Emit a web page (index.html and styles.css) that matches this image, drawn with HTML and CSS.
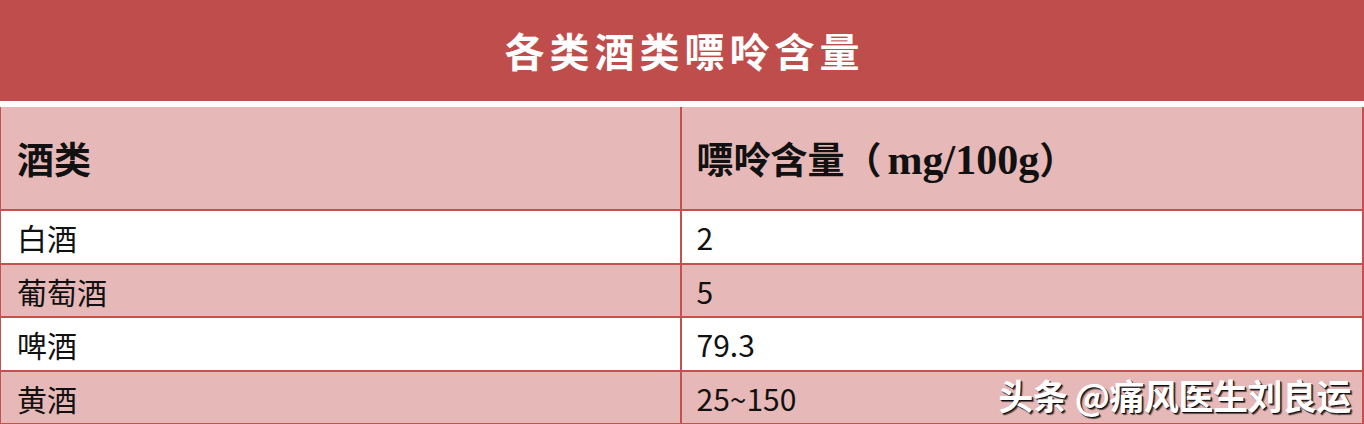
FILE: index.html
```html
<!DOCTYPE html>
<html lang="zh-CN">
<head>
<meta charset="utf-8">
<title>各类酒类嘌呤含量</title>
<link rel="stylesheet" href="styles.css">
</head>
<body>
<div class="page">
  <div class="title">各类酒类嘌呤含量</div>
  <div class="gap"></div>
  <table class="grid">
    <tr class="head">
      <th class="c1">酒类</th>
      <th class="c2">嘌呤含量（<span class="latin">mg/100g</span>）</th>
    </tr>
    <tr class="r white"><td class="c1">白酒</td><td class="c2">2</td></tr>
    <tr class="r pink short"><td class="c1">葡萄酒</td><td class="c2">5</td></tr>
    <tr class="r white"><td class="c1">啤酒</td><td class="c2">79.3</td></tr>
    <tr class="r pink short last"><td class="c1">黄酒</td><td class="c2">25~150</td></tr>
  </table>
  <div class="watermark">头条 @痛风医生刘良运</div>
</div>
</body>
</html>
```

FILE: styles.css
```css
html, body {
  margin: 0;
  padding: 0;
  background: #ffffff;
}
.page {
  position: relative;
  width: 1364px;
  height: 424px;
  overflow: hidden;
  font-family: "Noto Sans CJK SC", sans-serif;
}
.title {
  height: 101px;
  background: #bf4d4b;
  color: #ffffff;
  display: flex;
  align-items: center;
  justify-content: center;
  font-size: 40px;
  font-weight: 700;
  letter-spacing: 5px;
  padding-left: 5px;
  padding-bottom: 2px;
  box-sizing: border-box;
}
.gap {
  height: 6px;
  background: #ffffff;
}
.grid {
  width: 1364px;
  border-collapse: collapse;
  table-layout: fixed;
}
.grid th, .grid td {
  padding: 0;
  text-align: left;
  vertical-align: middle;
  border-bottom: 2px solid #c5504e;
}
.grid .c1 {
  width: 680px;
  padding-left: 16px;
  border-left: 1px solid #c5504e;
  border-right: 2px solid #c5504e;
  box-sizing: border-box;
}
.grid .c2 {
  padding-left: 15px;
  border-right: 2px solid #c5504e;
}
.head th {
  height: 102px;
  background: #e6b8b7;
  font-family: "Liberation Serif", "Noto Sans CJK SC", serif;
  font-size: 37px;
  font-weight: 700;
  color: #111111;
}
.head .latin {
  font-family: "Liberation Serif", serif;
  font-size: 42px;
  font-weight: 700;
  padding-left: 6px;
}
.r td {
  height: 52px;
  font-size: 30px;
  color: #111111;
  line-height: 1;
}
.r.short td {
  height: 51px;
}
.r.white td {
  background: #ffffff;
}
.r.pink td {
  background: #e6b8b7;
}
.watermark {
  position: absolute;
  right: 13px;
  bottom: 12px;
  font-size: 35px;
  font-weight: 700;
  color: #ffffff;
  line-height: 1;
  white-space: nowrap;
  letter-spacing: -0.5px;
  text-shadow: 1px 1px 0 #111111, 2px 2px 1px rgba(0, 0, 0, 0.6);
}
```
